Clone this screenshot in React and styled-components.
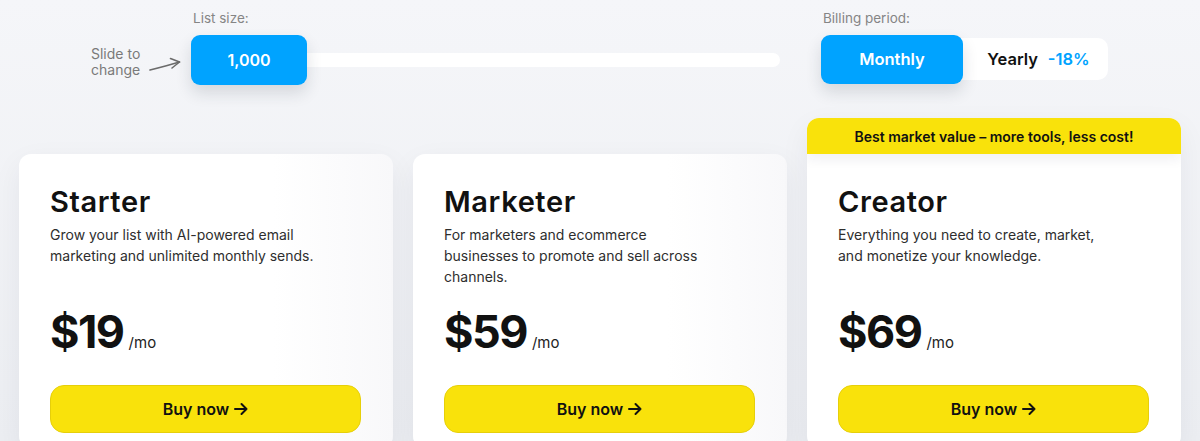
import React from "react";
import styled, { createGlobalStyle } from "styled-components";

const Colors = {
  blue: "#00a3ff",
  yellow: "#f9e20b",
  yellowEdge: "#e6cf0a",
  text: "#111",
  muted: "#858585",
  body: "#2e2e2e",
  bg: "#f2f3f6",
};

const Global = createGlobalStyle`
  html, body { margin: 0; padding: 0; }
  body {
    background: linear-gradient(180deg, #f5f6f9 0%, #eceef2 100%);
    font-family: Inter, "Noto Sans", Arial, sans-serif;
    color: ${Colors.text};
    height: 441px;
    overflow: hidden;
  }
`;

const Page = styled.div`
  width: 1200px;
  padding: 0 19px;
  box-sizing: border-box;
`;

const Controls = styled.div`
  display: flex;
  align-items: flex-start;
  height: 118px;
  padding-top: 10px;
  box-sizing: border-box;
`;

const Hint = styled.div`
  display: flex;
  align-items: center;
  gap: 6px;
  margin: 36px 10px 0 72px;
  flex-shrink: 0;
`;

const HintText = styled.div`
  width: 52px;
  font-size: 14px;
  line-height: 16px;
  color: #7a7a7a;
`;

const Group = styled.div`
  display: flex;
  flex-direction: column;
  gap: 9px;
  margin-left: ${(p) => p.$offset || 0}px;
`;

const Label = styled.div`
  font-size: 13.5px;
  line-height: 16px;
  color: ${Colors.muted};
  padding-left: 2px;
`;

const SliderRow = styled.div`
  position: relative;
  width: 589px;
  height: 50px;
  display: flex;
  align-items: center;
`;

const Track = styled.div`
  margin-left: 100px;
  flex: 1;
  height: 14px;
  border-radius: 7px;
  background: #fff;
`;

const Thumb = styled.div`
  position: absolute;
  left: 0;
  top: 0;
  width: 116px;
  height: 50px;
  border-radius: 9px;
  background: ${Colors.blue};
  color: #fff;
  font-weight: 600;
  font-size: 16px;
  display: flex;
  align-items: center;
  justify-content: center;
  box-shadow: 0 8px 16px rgba(30, 40, 60, 0.14);
`;

const Toggle = styled.div`
  display: flex;
  align-items: center;
  width: 287px;
  height: 42px;
  margin-top: 3px;
  background: #fff;
  border-radius: 10px;
`;

const ToggleOption = styled.div`
  height: ${(p) => (p.$active ? "49px" : "42px")};
  width: ${(p) => (p.$active ? "142px" : "auto")};
  flex: ${(p) => (p.$active ? "none" : "1")};
  border-radius: 9px;
  background: ${(p) => (p.$active ? Colors.blue : "transparent")};
  color: ${(p) => (p.$active ? "#fff" : Colors.text)};
  box-shadow: ${(p) => (p.$active ? "0 8px 16px rgba(30,40,60,0.14)" : "none")};
  font-weight: 600;
  font-size: 16.5px;
  display: flex;
  align-items: center;
  justify-content: center;
  gap: 10px;
  padding-left: ${(p) => (p.$active ? "0" : "6px")};
`;

const Discount = styled.span`
  color: ${Colors.blue};
`;

const Cards = styled.div`
  display: grid;
  grid-template-columns: repeat(3, 374px);
  gap: 20px;
  align-items: end;
`;

const Card = styled.div`
  border-radius: 12px;
  overflow: hidden;
  background: ${(p) =>
    p.$featured ? "#fff" : "linear-gradient(90deg, #fff 68%, #f8f8fa 100%)"};
  box-shadow: 0 10px 30px rgba(30, 40, 60, 0.06);
  height: ${(p) => (p.$featured ? "330px" : "294px")};
  display: flex;
  flex-direction: column;
`;

const Banner = styled.div`
  background: ${Colors.yellow};
  height: 36px;
  display: flex;
  align-items: center;
  justify-content: center;
  font-size: 14px;
  font-weight: 600;
  color: #111;
  box-shadow: 0 6px 12px rgba(30, 40, 60, 0.06);
  position: relative;
`;

const CardBody = styled.div`
  padding: 30px 31px 0 31px;
  display: flex;
  flex-direction: column;
`;

const Title = styled.h2`
  margin: 0;
  font-size: 29px;
  line-height: 36px;
  font-weight: 600;
  letter-spacing: 0.6px;
`;

const Desc = styled.p`
  margin: 4px 0 0;
  font-size: 14px;
  line-height: 21px;
  color: ${Colors.body};
  height: 63px;
  max-width: 270px;
`;

const PriceRow = styled.div`
  display: flex;
  align-items: baseline;
  gap: 5px;
  margin-top: 20px;
  height: 50px;
`;

const Price = styled.span`
  font-size: 45px;
  font-weight: 700;
  letter-spacing: -1.5px;
  line-height: 50px;
`;

const Per = styled.span`
  font-size: 15px;
  color: #222;
`;

const BuyButton = styled.button`
  margin-top: 28px;
  width: 311px;
  height: 48px;
  border-radius: 14px;
  border: 1px solid ${Colors.yellowEdge};
  background: ${Colors.yellow};
  font-family: inherit;
  font-size: 16px;
  font-weight: 600;
  color: #111;
  display: flex;
  align-items: center;
  justify-content: center;
  gap: 5px;
  cursor: pointer;
`;

const HandArrow = () => (
  <svg width="32" height="16" viewBox="0 0 32 16" fill="none" style={{ marginTop: 6 }}>
    <path d="M1 13 C 9 11, 19 8.5, 30.5 5" stroke="#6b6b6b" strokeWidth="1.6" strokeLinecap="round" />
    <path d="M21.5 1.5 L30.5 5 L23 11" stroke="#6b6b6b" strokeWidth="1.6" strokeLinecap="round" strokeLinejoin="round" />
  </svg>
);

const Arrow = () => (
  <svg width="14" height="14" viewBox="0 0 14 14" fill="none">
    <path d="M1 7 H12.5 M7.5 2 L12.5 7 L7.5 12" stroke="#111" strokeWidth="2" strokeLinecap="round" strokeLinejoin="round" />
  </svg>
);

const plans = [
  {
    name: "Starter",
    desc: "Grow your list with AI-powered email marketing and unlimited monthly sends.",
    price: "$19",
  },
  {
    name: "Marketer",
    desc: "For marketers and ecommerce businesses to promote and sell across channels.",
    price: "$59",
  },
  {
    name: "Creator",
    desc: "Everything you need to create, market, and monetize your knowledge.",
    price: "$69",
    featured: true,
  },
];

export default function App() {
  return (
    <>
      <Global />
      <Page>
        <Controls>
          <Hint>
            <HintText>Slide to change</HintText>
            <HandArrow />
          </Hint>
          <Group>
            <Label>List size:</Label>
            <SliderRow>
              <Track />
              <Thumb>1,000</Thumb>
            </SliderRow>
          </Group>
          <Group $offset={41}>
            <Label>Billing period:</Label>
            <Toggle>
              <ToggleOption $active>Monthly</ToggleOption>
              <ToggleOption>
                Yearly <Discount>-18%</Discount>
              </ToggleOption>
            </Toggle>
          </Group>
        </Controls>
        <Cards>
          {plans.map((p) => (
            <Card key={p.name} $featured={p.featured}>
              {p.featured && <Banner>Best market value – more tools, less cost!</Banner>}
              <CardBody>
                <Title>{p.name}</Title>
                <Desc>{p.desc}</Desc>
                <PriceRow>
                  <Price>{p.price}</Price>
                  <Per>/mo</Per>
                </PriceRow>
                <BuyButton>
                  Buy now <Arrow />
                </BuyButton>
              </CardBody>
            </Card>
          ))}
        </Cards>
      </Page>
    </>
  );
}
